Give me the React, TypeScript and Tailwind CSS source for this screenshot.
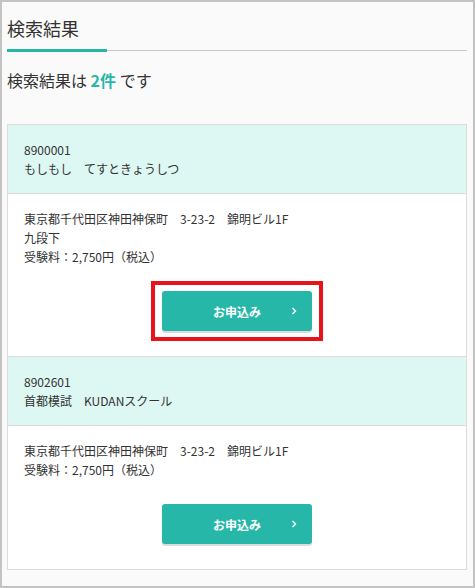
import { Fragment } from 'react';

type School = {
  code: string;
  name: string;
  lines: string[];
  highlighted?: boolean;
};

const schools: School[] = [
  {
    code: '8900001',
    name: 'もしもし　てすときょうしつ',
    lines: ['東京都千代田区神田神保町　3-23-2　錦明ビル1F', '九段下', '受験料：2,750円（税込）'],
    highlighted: true,
  },
  {
    code: '8902601',
    name: '首都模試　KUDANスクール',
    lines: ['東京都千代田区神田神保町　3-23-2　錦明ビル1F', '受験料：2,750円（税込）'],
  },
];

function ApplyButton({ highlighted }: { highlighted?: boolean }) {
  return (
    <div className="relative">
      {highlighted && (
        <span className="pointer-events-none absolute -left-[11px] -right-[11px] -top-[10px] -bottom-[10px] border-4 border-[#e8141c]" />
      )}
      <button
        type="button"
        className="relative flex h-[40px] w-[150px] items-center justify-center rounded-[3px] bg-[#27b7a8] text-[12px] font-bold text-white shadow-[0_2px_0_#dcdcdc]"
      >
        お申込み
        <svg
          className="absolute right-[15px] top-1/2 -translate-y-1/2"
          width="6"
          height="8"
          viewBox="0 0 6 8"
          fill="none"
        >
          <polyline points="1.5,1 4.5,4 1.5,7" stroke="white" strokeWidth="1.4" />
        </svg>
      </button>
    </div>
  );
}

export default function App() {
  return (
    <div
      className="h-[588px] w-[475px] overflow-hidden border-2 border-[#c3c3c3] bg-[#fafafa] pl-[5px] pr-[6px] text-[#333333]"
      style={{ fontFamily: '"Noto Sans CJK JP", "Noto Sans", sans-serif' }}
    >
      <h1 className="pt-[12px] pb-[7px] text-[18px] leading-[28px] font-normal">検索結果</h1>
      <div className="flex h-[3px] items-center">
        <div className="h-[3px] w-[100px] bg-[#27b7a8]" />
        <div className="h-px flex-1 bg-[#c8c8c8]" />
      </div>

      <p className="mt-[16px] mb-[32px] text-[16px] leading-[24px]">
        検索結果は <span className="font-bold text-[#27b7a8]">2件</span> です
      </p>

      <div className="border border-[#dcdcdc]">
        {schools.map((s, i) => (
          <Fragment key={s.code}>
            <div
              className={`bg-[#ddf7f2] px-[16px] py-[15px] text-[12px] leading-[19px] ${
                i > 0 ? 'border-t border-[#dcdcdc]' : ''
              }`}
            >
              <div>{s.code}</div>
              <div>{s.name}</div>
            </div>
            <div className="border-t border-[#dcdcdc] bg-white px-[16px] pt-[15px] pb-[25px] text-[12px] leading-[19px]">
              {s.lines.map((l) => (
                <div key={l}>{l}</div>
              ))}
              <div className="mt-[25px] flex justify-center">
                <ApplyButton highlighted={s.highlighted} />
              </div>
            </div>
          </Fragment>
        ))}
      </div>
    </div>
  );
}
